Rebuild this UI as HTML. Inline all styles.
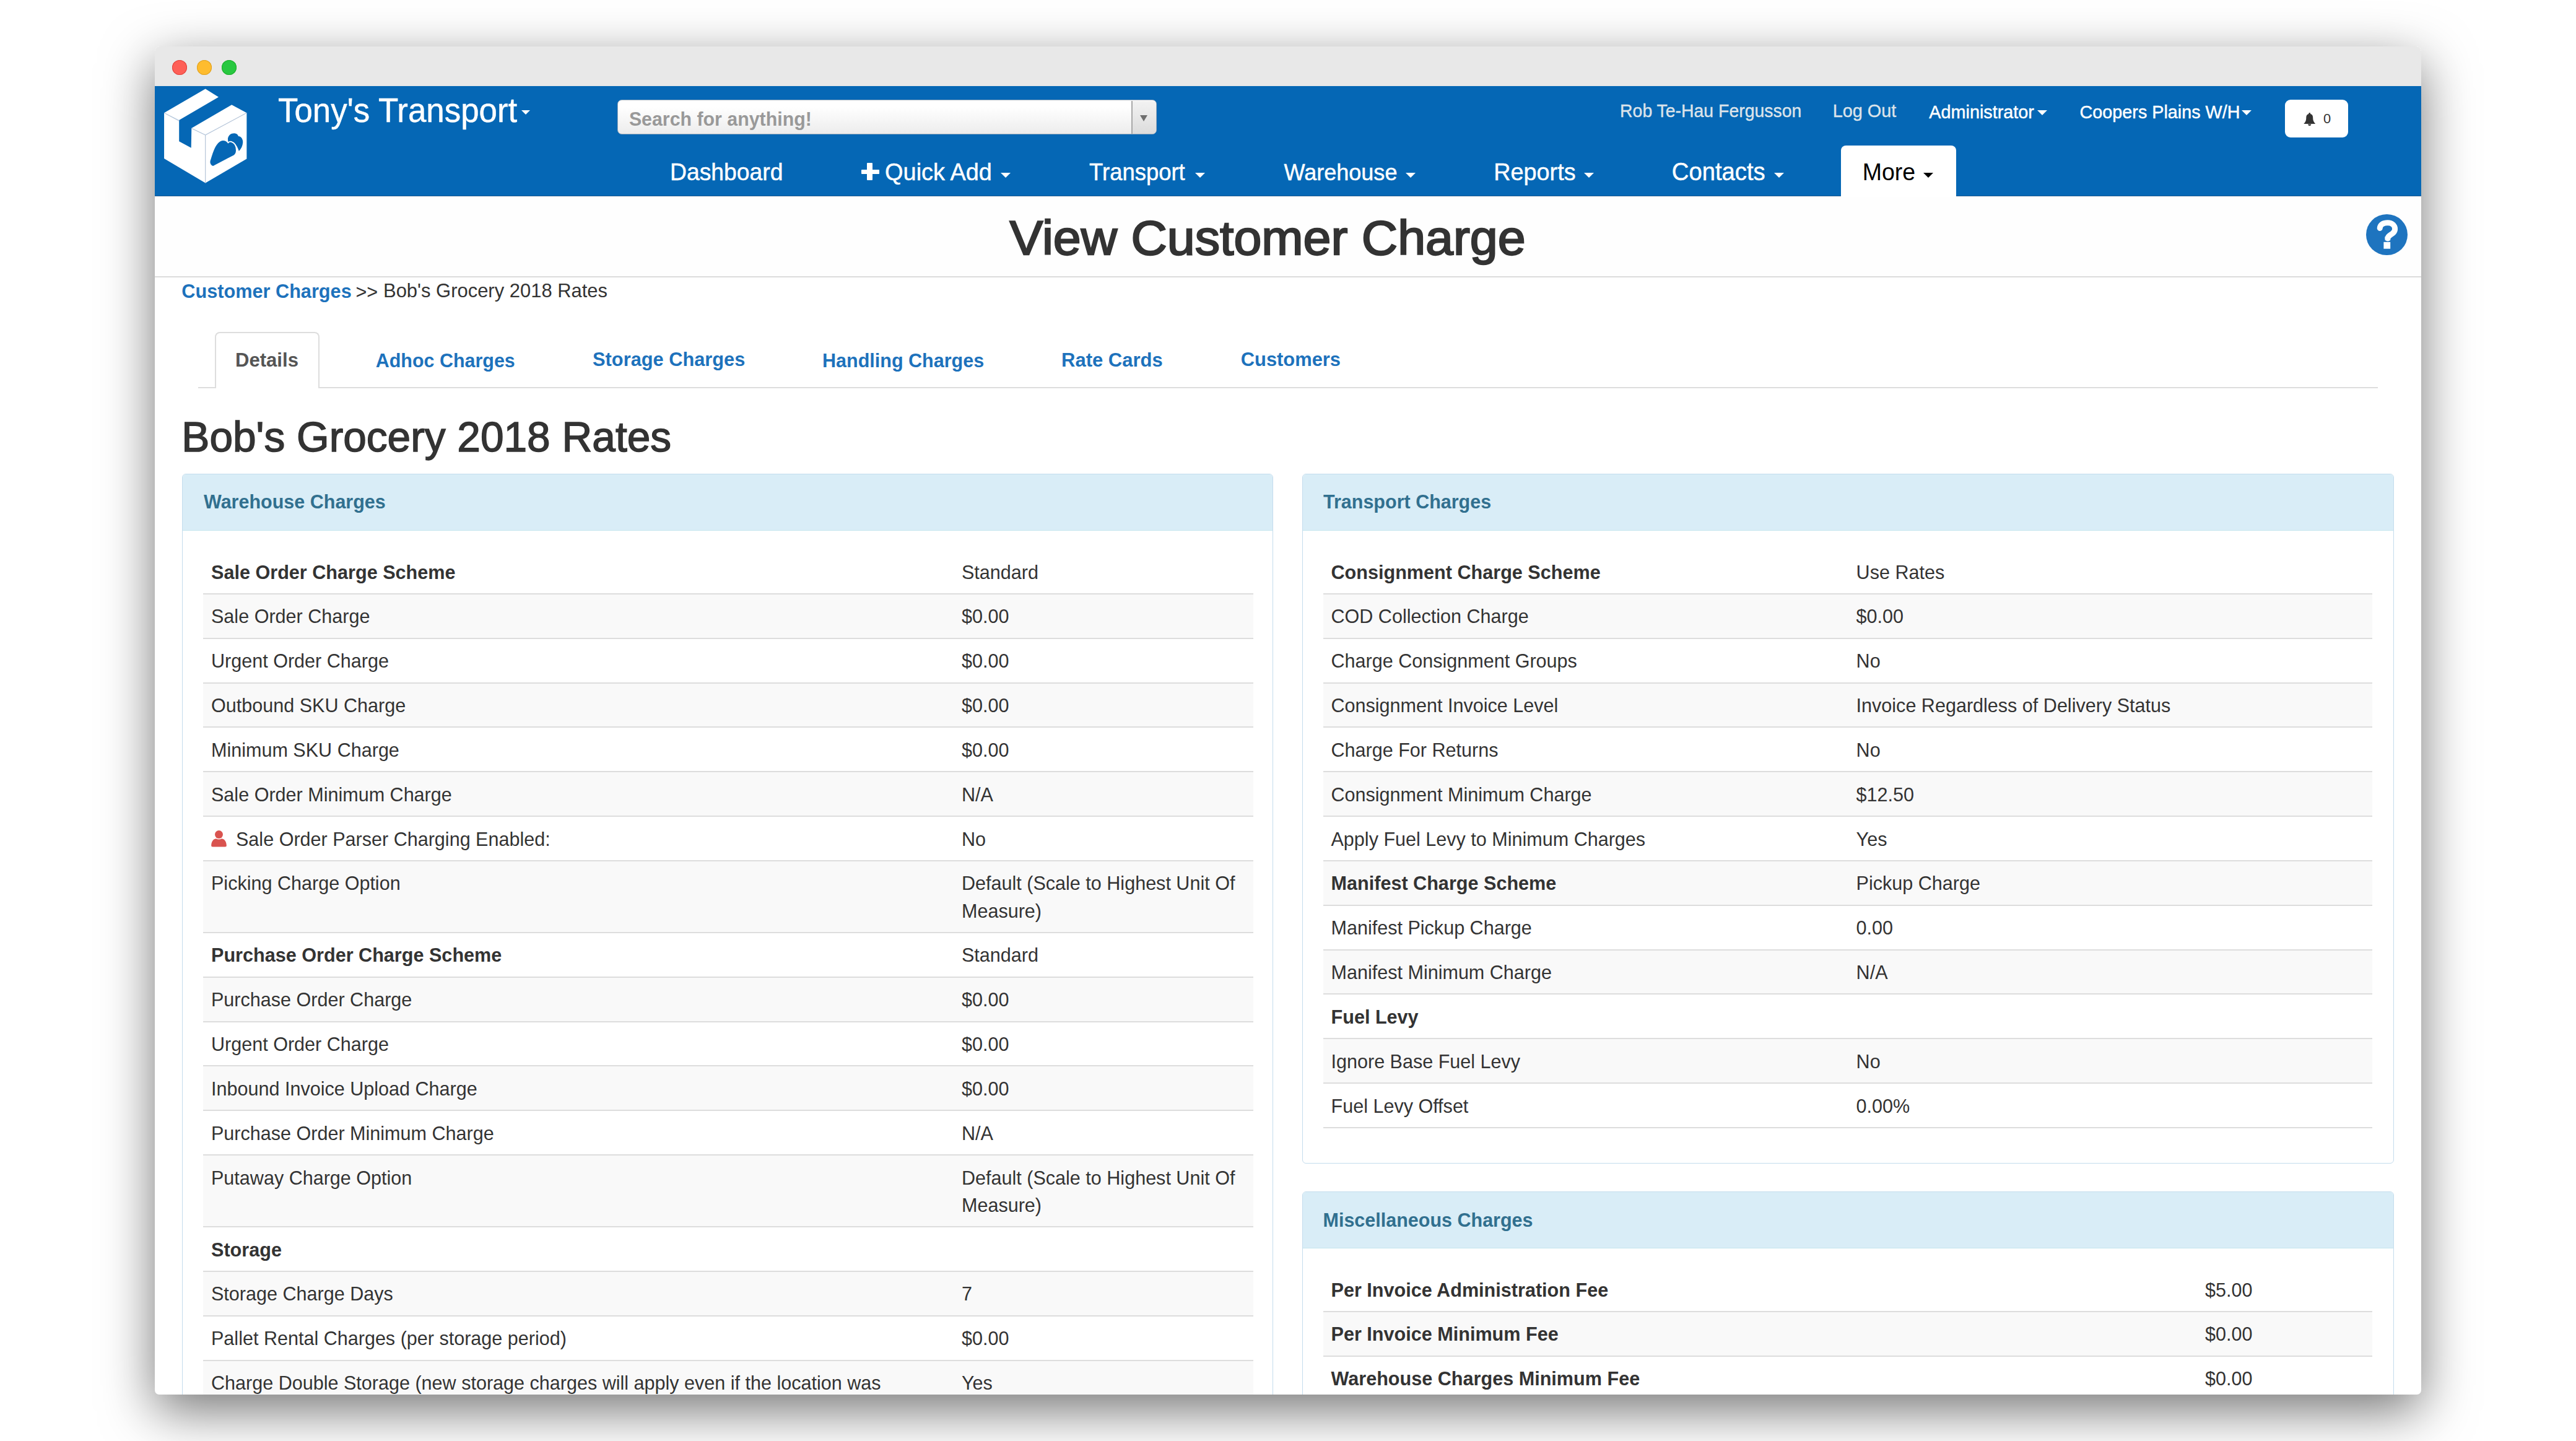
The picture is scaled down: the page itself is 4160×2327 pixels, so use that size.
<!DOCTYPE html>
<html><head><meta charset="utf-8"><title>View Customer Charge</title>
<style>
html,body{margin:0;padding:0;background:#fff;width:4160px;height:2327px;overflow:hidden}
body{font-family:"Liberation Sans",sans-serif;position:relative}
.r{position:absolute}
.t{position:absolute;line-height:1;white-space:nowrap;transform:scaleY(1.045)}
#win{position:absolute;left:250px;top:75px;width:3660px;height:2177px;border-radius:8px 8px 7px 7px;box-shadow:0 26px 84px rgba(0,0,0,.54);background:#fff}
#clip{position:absolute;left:0;top:0;width:4160px;height:2327px;clip-path:inset(75px 250px 75px 250px round 8px 8px 7px 7px)}
</style></head>
<body>
<div id="win"></div>
<div id="clip">
<div class="r" style="left:250.0px;top:75.0px;width:3660.0px;height:64.4px;background:#e8e8e8;border-radius:8px 8px 0 0"></div>
<div class="r" style="left:277.8px;top:96.6px;width:24.4px;height:24.4px;border-radius:50%;background:#fe5f57;box-shadow:inset 0 0 0 1px #e0443e"></div>
<div class="r" style="left:317.8px;top:96.6px;width:24.4px;height:24.4px;border-radius:50%;background:#febc2e;box-shadow:inset 0 0 0 1px #dea123"></div>
<div class="r" style="left:357.8px;top:96.6px;width:24.4px;height:24.4px;border-radius:50%;background:#28c840;box-shadow:inset 0 0 0 1px #1dad2b"></div>
<div class="r" style="left:250.0px;top:139.4px;width:3660.0px;height:178.1px;background:#0567b5;border-bottom:1.5px solid #1f5a8e;box-sizing:border-box"></div>
<svg class="r" style="left:255px;top:135px" width="160" height="170" viewBox="0 0 1356 1441">
<polygon points="85,400 650,72 830,185 290,500" fill="#fff"/>
<polygon points="460,610 1010,290 1215,400 650,700" fill="#fff"/>
<polygon points="85,400 290,500 290,790 455,880 460,610 650,700 650,1360 85,1025" fill="#fff"/>
<polygon points="650,700 1215,400 1215,1030 650,1360" fill="#fff"/>
<polyline points="85,400 290,510" stroke="#b9c6d8" stroke-width="9" fill="none"/>
<polyline points="460,612 650,705 1215,400" stroke="#b9c6d8" stroke-width="9" fill="none"/>
<line x1="650" y1="705" x2="650" y2="1360" stroke="#b9c6d8" stroke-width="10"/>
<path fill="#0567b5" d="M957,757 C962,708 1000,680 1047,681 C1078,682 1097,700 1101,720 C1135,718 1168,760 1163,808 C1160,850 1140,895 1109,924 C1095,880 1080,850 1060,830 C1030,800 990,790 961,808 Z"/>
<path fill="#0567b5" stroke="#fff" stroke-width="16" d="M755,1136 C705,1125 700,1070 716,1035 C738,965 758,885 800,832 C830,790 860,770 891,771 C930,772 950,790 961,808 C975,795 990,790 1006,796 C1050,810 1075,850 1076,915 C1076,960 1050,985 1026,994 L755,1136 Z"/>
</svg>
<div class="t" style="left:449.0px;top:152.9px;font-size:52.88px;font-weight:400;color:#fff;transform-origin:0 44.8px;-webkit-text-stroke:0.45px #fff">Tony's Transport</div>
<div class="r" style="left:842.0px;top:178.0px;width:0;height:0;border-left:7.5px solid transparent;border-right:7.5px solid transparent;border-top:7.0px solid #fff"></div>
<div class="r" style="left:997px;top:161.4px;width:871px;height:55.4px;box-sizing:border-box;border:1.5px solid #9eadbd;border-radius:7px;background:linear-gradient(#ffffff 20%,#ececec)"></div>
<div class="r" style="left:1826.8px;top:162.5px;width:2.2px;height:53.0px;background:#a8a8a8"></div>
<div class="r" style="left:1829.0px;top:162.5px;width:37.5px;height:53.0px;background:linear-gradient(#f2f2f2,#dcdcdc);border-radius:0 6px 6px 0"></div>
<div class="r" style="left:1841.0px;top:186.0px;width:0;height:0;border-left:6.7px solid transparent;border-right:6.7px solid transparent;border-top:10.0px solid #6e6e6e"></div>
<div class="t" style="left:1015.9px;top:177.9px;font-size:30.33px;font-weight:700;color:#999;transform-origin:0 25.7px;">Search for anything!</div>
<div class="t" style="left:2616.1px;top:165.1px;font-size:28.42px;font-weight:400;color:#dce3ea;transform-origin:0 24.1px;-webkit-text-stroke:0.4px #dce3ea">Rob Te-Hau Fergusson</div>
<div class="t" style="left:2959.7px;top:164.8px;font-size:28.82px;font-weight:400;color:#dce3ea;transform-origin:0 24.4px;-webkit-text-stroke:0.4px #dce3ea">Log Out</div>
<div class="t" style="left:3115.3px;top:167.0px;font-size:28.81px;font-weight:400;color:#fff;transform-origin:0 24.4px;-webkit-text-stroke:0.45px #fff">Administrator</div>
<div class="r" style="left:3290.0px;top:178.0px;width:0;height:0;border-left:8.2px solid transparent;border-right:8.2px solid transparent;border-top:8.0px solid #fff"></div>
<div class="t" style="left:3358.6px;top:167.1px;font-size:28.75px;font-weight:400;color:#fff;transform-origin:0 24.3px;-webkit-text-stroke:0.45px #fff">Coopers Plains W/H</div>
<div class="r" style="left:3619.5px;top:178.0px;width:0;height:0;border-left:8.5px solid transparent;border-right:8.5px solid transparent;border-top:8.0px solid #fff"></div>
<div class="r" style="left:3689.6px;top:160.6px;width:102.8px;height:61.4px;background:#fff;border-radius:9px"></div>
<svg class="r" style="left:3719.5px;top:181.5px" width="19.5" height="21.5" viewBox="0 0 19.5 21.5">
<circle cx="9.75" cy="1.4" r="1.4" fill="#333"/>
<path d="M9.75,1.9 C5.6,1.9 4.3,4.6 4.3,8.2 C4.3,12.2 3.4,14.6 0.3,18.1 L19.2,18.1 C16.1,14.6 15.2,12.2 15.2,8.2 C15.2,4.6 13.9,1.9 9.75,1.9 Z" fill="#333"/>
<path d="M7.1,18.4 C7.4,21.8 12.1,21.8 12.4,18.4 Z" fill="#333"/>
</svg>
<div class="t" style="left:3751.9px;top:181.2px;font-size:21.89px;font-weight:400;color:#333;transform-origin:0 18.5px;transform:none">0</div>
<div class="t" style="left:1082.0px;top:260.0px;font-size:37.3px;font-weight:400;color:#fff;transform-origin:0 31.6px;-webkit-text-stroke:0.45px #fff">Dashboard</div>
<div class="r" style="left:1390.5px;top:273.6px;width:29.1px;height:7.8px;background:#fff;border-radius:1px"></div>
<div class="r" style="left:1399.9px;top:263.1px;width:8.9px;height:28.3px;background:#fff;border-radius:1px"></div>
<div class="t" style="left:1429.1px;top:259.5px;font-size:37.93px;font-weight:400;color:#fff;transform-origin:0 32.1px;-webkit-text-stroke:0.45px #fff">Quick Add</div>
<div class="r" style="left:1616.0px;top:279.0px;width:0;height:0;border-left:8.5px solid transparent;border-right:8.5px solid transparent;border-top:8.0px solid #fff"></div>
<div class="t" style="left:1759.1px;top:260.7px;font-size:36.46px;font-weight:400;color:#fff;transform-origin:0 30.9px;-webkit-text-stroke:0.45px #fff">Transport</div>
<div class="r" style="left:1930.0px;top:279.0px;width:0;height:0;border-left:8.5px solid transparent;border-right:8.5px solid transparent;border-top:8.0px solid #fff"></div>
<div class="t" style="left:2073.5px;top:261.1px;font-size:36.04px;font-weight:400;color:#fff;transform-origin:0 30.5px;-webkit-text-stroke:0.45px #fff">Warehouse</div>
<div class="r" style="left:2270.0px;top:279.0px;width:0;height:0;border-left:8.5px solid transparent;border-right:8.5px solid transparent;border-top:8.0px solid #fff"></div>
<div class="t" style="left:2412.3px;top:259.6px;font-size:37.78px;font-weight:400;color:#fff;transform-origin:0 32.0px;-webkit-text-stroke:0.45px #fff">Reports</div>
<div class="r" style="left:2558.0px;top:279.0px;width:0;height:0;border-left:8.5px solid transparent;border-right:8.5px solid transparent;border-top:8.0px solid #fff"></div>
<div class="t" style="left:2699.8px;top:259.2px;font-size:38.24px;font-weight:400;color:#fff;transform-origin:0 32.4px;-webkit-text-stroke:0.45px #fff">Contacts</div>
<div class="r" style="left:2865.0px;top:279.0px;width:0;height:0;border-left:8.5px solid transparent;border-right:8.5px solid transparent;border-top:8.0px solid #fff"></div>
<div class="r" style="left:2973.0px;top:235.2px;width:185.5px;height:82.3px;background:#fff;border-radius:8px 8px 0 0"></div>
<div class="t" style="left:3007.7px;top:259.9px;font-size:37.49px;font-weight:400;color:#000;transform-origin:0 31.7px;">More</div>
<div class="r" style="left:3106.0px;top:278.5px;width:0;height:0;border-left:8.5px solid transparent;border-right:8.5px solid transparent;border-top:8.0px solid #000"></div>
<div class="r" style="left:250.0px;top:317.5px;width:3660.0px;height:130.7px;background:#fefefe;border-bottom:2px solid #dcdcdc;box-sizing:border-box"></div>
<div class="t" style="left:1630.5px;top:343.2px;font-size:80.74px;font-weight:400;color:#333;transform-origin:0 68.3px;-webkit-text-stroke:2.4px #333;transform:scaleY(0.96)">View Customer Charge</div>
<div class="r" style="left:3821px;top:345.5px;width:66.6px;height:66.6px;border-radius:50%;background:#1e74bf"></div>
<svg class="r" style="left:3836px;top:354px" width="40" height="50" viewBox="0 0 40 50">
<path d="M7.2,14.5 C7.8,8.5 13,5.8 19.8,5.8 C27,5.8 31.6,10 31.6,15.8 C31.6,21.5 27,23.5 23.5,26 C21.2,27.6 20,29 20,31" fill="none" stroke="#fff" stroke-width="9" stroke-linecap="round"/>
<rect x="15.6" y="28" width="8.6" height="6.2" fill="#fff"/>
<rect x="13.4" y="36.8" width="10.8" height="10.9" fill="#fff"/>
</svg>
<div class="t" style="left:293.3px;top:455.6px;font-size:30.68px;font-weight:700;color:#1d72bc;transform-origin:0 26.0px;transform:none">Customer Charges</div>
<div class="t" style="left:574.5px;top:455.7px;font-size:30.6px;font-weight:400;color:#333;transform-origin:0 25.9px;transform:none">&gt;&gt;</div>
<div class="t" style="left:619.0px;top:455.4px;font-size:30.96px;font-weight:400;color:#333;transform-origin:0 26.2px;transform:none">Bob's Grocery 2018 Rates</div>
<div class="r" style="left:320.0px;top:624.8px;width:3520.0px;height:2.0px;background:#dddddd"></div>
<div class="r" style="left:346.5px;top:536.4px;width:169px;height:90.4px;box-sizing:border-box;border:2px solid #dddddd;border-bottom:none;border-radius:8px 8px 0 0;background:#fff"></div>
<div class="t" style="left:380.0px;top:566.0px;font-size:31.09px;font-weight:700;color:#555;transform-origin:0 26.3px;transform:none">Details</div>
<div class="t" style="left:606.8px;top:566.5px;font-size:30.44px;font-weight:700;color:#1d72bc;transform-origin:0 25.8px;transform:none">Adhoc Charges</div>
<div class="t" style="left:957.1px;top:566.3px;font-size:30.77px;font-weight:700;color:#1d72bc;transform-origin:0 26.0px;transform:none">Storage Charges</div>
<div class="t" style="left:1328.0px;top:566.5px;font-size:30.53px;font-weight:700;color:#1d72bc;transform-origin:0 25.8px;transform:none">Handling Charges</div>
<div class="t" style="left:1714.0px;top:566.1px;font-size:31.01px;font-weight:700;color:#1d72bc;transform-origin:0 26.2px;transform:none">Rate Cards</div>
<div class="t" style="left:2003.8px;top:566.2px;font-size:30.86px;font-weight:700;color:#1d72bc;transform-origin:0 26.1px;transform:none">Customers</div>
<div class="t" style="left:293.3px;top:671.7px;font-size:67.63px;font-weight:400;color:#333;transform-origin:0 57.2px;-webkit-text-stroke:1.5px #333;transform:none">Bob's Grocery 2018 Rates</div>
<div class="r" style="left:294px;top:764.5px;width:1762.3000000000002px;height:1535.5px;box-sizing:border-box;border:1.8px solid #c4dced;border-radius:6px;background:#fff;overflow:hidden"><div style="position:absolute;left:0;top:0;right:0;height:91.0px;background:#d9edf7;border-bottom:1.8px solid #c4e5ee;box-sizing:border-box"></div></div>
<div class="t" style="left:329.0px;top:795.2px;font-size:30.5px;font-weight:700;color:#31708f;transform-origin:0 25.8px;transform:none">Warehouse Charges</div>
<div class="r" style="left:2103px;top:764.5px;width:1762.5px;height:1114.0px;box-sizing:border-box;border:1.8px solid #c4dced;border-radius:6px;background:#fff;overflow:hidden"><div style="position:absolute;left:0;top:0;right:0;height:91.0px;background:#d9edf7;border-bottom:1.8px solid #c4e5ee;box-sizing:border-box"></div></div>
<div class="t" style="left:2137.0px;top:795.2px;font-size:30.5px;font-weight:700;color:#31708f;transform-origin:0 25.8px;transform:none">Transport Charges</div>
<div class="r" style="left:2103px;top:1923.7px;width:1762.5px;height:376.29999999999995px;box-sizing:border-box;border:1.8px solid #c4dced;border-radius:6px;background:#fff;overflow:hidden"><div style="position:absolute;left:0;top:0;right:0;height:91.29999999999995px;background:#d9edf7;border-bottom:1.8px solid #c4e5ee;box-sizing:border-box"></div></div>
<div class="t" style="left:2136.5px;top:1954.5px;font-size:30.5px;font-weight:700;color:#31708f;transform-origin:0 25.8px;transform:none">Miscellaneous Charges</div>
<div class="t" style="left:341.0px;top:908.5px;font-size:30.6px;font-weight:700;color:#333;transform-origin:0 25.9px;">Sale Order Charge Scheme</div>
<div class="t" style="left:1553.0px;top:908.5px;font-size:30.55px;font-weight:400;color:#333;transform-origin:0 25.9px;">Standard</div>
<div class="r" style="left:328.0px;top:958.8px;width:1695.5px;height:71.8px;background:#f9f9f9"></div>
<div class="r" style="left:328.0px;top:957.8px;width:1695.5px;height:2.0px;background:#dddddd"></div>
<div class="t" style="left:341.0px;top:980.4px;font-size:30.55px;font-weight:400;color:#333;transform-origin:0 25.9px;">Sale Order Charge</div>
<div class="t" style="left:1553.0px;top:980.4px;font-size:30.55px;font-weight:400;color:#333;transform-origin:0 25.9px;">$0.00</div>
<div class="r" style="left:328.0px;top:1029.7px;width:1695.5px;height:2.0px;background:#dddddd"></div>
<div class="t" style="left:341.0px;top:1052.2px;font-size:30.55px;font-weight:400;color:#333;transform-origin:0 25.9px;">Urgent Order Charge</div>
<div class="t" style="left:1553.0px;top:1052.2px;font-size:30.55px;font-weight:400;color:#333;transform-origin:0 25.9px;">$0.00</div>
<div class="r" style="left:328.0px;top:1102.5px;width:1695.5px;height:71.8px;background:#f9f9f9"></div>
<div class="r" style="left:328.0px;top:1101.5px;width:1695.5px;height:2.0px;background:#dddddd"></div>
<div class="t" style="left:341.0px;top:1124.0px;font-size:30.55px;font-weight:400;color:#333;transform-origin:0 25.9px;">Outbound SKU Charge</div>
<div class="t" style="left:1553.0px;top:1124.0px;font-size:30.55px;font-weight:400;color:#333;transform-origin:0 25.9px;">$0.00</div>
<div class="r" style="left:328.0px;top:1173.3px;width:1695.5px;height:2.0px;background:#dddddd"></div>
<div class="t" style="left:341.0px;top:1195.9px;font-size:30.55px;font-weight:400;color:#333;transform-origin:0 25.9px;">Minimum SKU Charge</div>
<div class="t" style="left:1553.0px;top:1195.9px;font-size:30.55px;font-weight:400;color:#333;transform-origin:0 25.9px;">$0.00</div>
<div class="r" style="left:328.0px;top:1246.1px;width:1695.5px;height:71.8px;background:#f9f9f9"></div>
<div class="r" style="left:328.0px;top:1245.1px;width:1695.5px;height:2.0px;background:#dddddd"></div>
<div class="t" style="left:341.0px;top:1267.7px;font-size:30.55px;font-weight:400;color:#333;transform-origin:0 25.9px;">Sale Order Minimum Charge</div>
<div class="t" style="left:1553.0px;top:1267.7px;font-size:30.55px;font-weight:400;color:#333;transform-origin:0 25.9px;">N/A</div>
<div class="r" style="left:328.0px;top:1317.0px;width:1695.5px;height:2.0px;background:#dddddd"></div>
<svg class="r" style="left:340px;top:1340.9799999999998px" width="27" height="28" viewBox="0 0 27 28">
<circle cx="13.5" cy="6.6" r="6.5" fill="#d9534f"/>
<path d="M1.2,24.5 C1.2,18 4.5,13.8 9,13.2 C11,14.8 16,14.8 18,13.2 C22.5,13.8 25.8,18 25.8,24.5 C25.8,26 25,26.4 23.5,26.4 L3.5,26.4 C2,26.4 1.2,26 1.2,24.5 Z" fill="#d9534f"/>
</svg>
<div class="t" style="left:381.0px;top:1339.5px;font-size:30.55px;font-weight:400;color:#333;transform-origin:0 25.9px;">Sale Order Parser Charging Enabled:</div>
<div class="t" style="left:1553.0px;top:1339.5px;font-size:30.55px;font-weight:400;color:#333;transform-origin:0 25.9px;">No</div>
<div class="r" style="left:328.0px;top:1389.8px;width:1695.5px;height:116.0px;background:#f9f9f9"></div>
<div class="r" style="left:328.0px;top:1388.8px;width:1695.5px;height:2.0px;background:#dddddd"></div>
<div class="t" style="left:341.0px;top:1411.3px;font-size:30.55px;font-weight:400;color:#333;transform-origin:0 25.9px;">Picking Charge Option</div>
<div class="t" style="left:1553.0px;top:1411.3px;font-size:30.55px;font-weight:400;color:#333;transform-origin:0 25.9px;">Default (Scale to Highest Unit Of</div>
<div class="t" style="left:1553.0px;top:1455.5px;font-size:30.55px;font-weight:400;color:#333;transform-origin:0 25.9px;">Measure)</div>
<div class="r" style="left:328.0px;top:1504.8px;width:1695.5px;height:2.0px;background:#dddddd"></div>
<div class="t" style="left:341.0px;top:1527.3px;font-size:30.6px;font-weight:700;color:#333;transform-origin:0 25.9px;">Purchase Order Charge Scheme</div>
<div class="t" style="left:1553.0px;top:1527.4px;font-size:30.55px;font-weight:400;color:#333;transform-origin:0 25.9px;">Standard</div>
<div class="r" style="left:328.0px;top:1577.7px;width:1695.5px;height:71.8px;background:#f9f9f9"></div>
<div class="r" style="left:328.0px;top:1576.7px;width:1695.5px;height:2.0px;background:#dddddd"></div>
<div class="t" style="left:341.0px;top:1599.2px;font-size:30.55px;font-weight:400;color:#333;transform-origin:0 25.9px;">Purchase Order Charge</div>
<div class="t" style="left:1553.0px;top:1599.2px;font-size:30.55px;font-weight:400;color:#333;transform-origin:0 25.9px;">$0.00</div>
<div class="r" style="left:328.0px;top:1648.5px;width:1695.5px;height:2.0px;background:#dddddd"></div>
<div class="t" style="left:341.0px;top:1671.0px;font-size:30.55px;font-weight:400;color:#333;transform-origin:0 25.9px;">Urgent Order Charge</div>
<div class="t" style="left:1553.0px;top:1671.0px;font-size:30.55px;font-weight:400;color:#333;transform-origin:0 25.9px;">$0.00</div>
<div class="r" style="left:328.0px;top:1721.3px;width:1695.5px;height:71.8px;background:#f9f9f9"></div>
<div class="r" style="left:328.0px;top:1720.3px;width:1695.5px;height:2.0px;background:#dddddd"></div>
<div class="t" style="left:341.0px;top:1742.9px;font-size:30.55px;font-weight:400;color:#333;transform-origin:0 25.9px;">Inbound Invoice Upload Charge</div>
<div class="t" style="left:1553.0px;top:1742.9px;font-size:30.55px;font-weight:400;color:#333;transform-origin:0 25.9px;">$0.00</div>
<div class="r" style="left:328.0px;top:1792.2px;width:1695.5px;height:2.0px;background:#dddddd"></div>
<div class="t" style="left:341.0px;top:1814.7px;font-size:30.55px;font-weight:400;color:#333;transform-origin:0 25.9px;">Purchase Order Minimum Charge</div>
<div class="t" style="left:1553.0px;top:1814.7px;font-size:30.55px;font-weight:400;color:#333;transform-origin:0 25.9px;">N/A</div>
<div class="r" style="left:328.0px;top:1865.0px;width:1695.5px;height:116.0px;background:#f9f9f9"></div>
<div class="r" style="left:328.0px;top:1864.0px;width:1695.5px;height:2.0px;background:#dddddd"></div>
<div class="t" style="left:341.0px;top:1886.5px;font-size:30.55px;font-weight:400;color:#333;transform-origin:0 25.9px;">Putaway Charge Option</div>
<div class="t" style="left:1553.0px;top:1886.5px;font-size:30.55px;font-weight:400;color:#333;transform-origin:0 25.9px;">Default (Scale to Highest Unit Of</div>
<div class="t" style="left:1553.0px;top:1930.7px;font-size:30.55px;font-weight:400;color:#333;transform-origin:0 25.9px;">Measure)</div>
<div class="r" style="left:328.0px;top:1980.0px;width:1695.5px;height:2.0px;background:#dddddd"></div>
<div class="t" style="left:341.0px;top:2002.5px;font-size:30.6px;font-weight:700;color:#333;transform-origin:0 25.9px;">Storage</div>
<div class="r" style="left:328.0px;top:2052.8px;width:1695.5px;height:71.8px;background:#f9f9f9"></div>
<div class="r" style="left:328.0px;top:2051.8px;width:1695.5px;height:2.0px;background:#dddddd"></div>
<div class="t" style="left:341.0px;top:2074.4px;font-size:30.55px;font-weight:400;color:#333;transform-origin:0 25.9px;">Storage Charge Days</div>
<div class="t" style="left:1553.0px;top:2074.4px;font-size:30.55px;font-weight:400;color:#333;transform-origin:0 25.9px;">7</div>
<div class="r" style="left:328.0px;top:2123.7px;width:1695.5px;height:2.0px;background:#dddddd"></div>
<div class="t" style="left:341.0px;top:2146.2px;font-size:30.55px;font-weight:400;color:#333;transform-origin:0 25.9px;">Pallet Rental Charges (per storage period)</div>
<div class="t" style="left:1553.0px;top:2146.2px;font-size:30.55px;font-weight:400;color:#333;transform-origin:0 25.9px;">$0.00</div>
<div class="r" style="left:328.0px;top:2196.5px;width:1695.5px;height:71.8px;background:#f9f9f9"></div>
<div class="r" style="left:328.0px;top:2195.5px;width:1695.5px;height:2.0px;background:#dddddd"></div>
<div class="t" style="left:341.0px;top:2218.0px;font-size:30.55px;font-weight:400;color:#333;transform-origin:0 25.9px;">Charge Double Storage (new storage charges will apply even if the location was</div>
<div class="t" style="left:1553.0px;top:2218.0px;font-size:30.55px;font-weight:400;color:#333;transform-origin:0 25.9px;">Yes</div>
<div class="t" style="left:2149.5px;top:908.5px;font-size:30.6px;font-weight:700;color:#333;transform-origin:0 25.9px;">Consignment Charge Scheme</div>
<div class="t" style="left:2997.6px;top:908.5px;font-size:30.55px;font-weight:400;color:#333;transform-origin:0 25.9px;">Use Rates</div>
<div class="r" style="left:2136.5px;top:958.8px;width:1694.8px;height:71.8px;background:#f9f9f9"></div>
<div class="r" style="left:2136.5px;top:957.8px;width:1694.8px;height:2.0px;background:#dddddd"></div>
<div class="t" style="left:2149.5px;top:980.4px;font-size:30.55px;font-weight:400;color:#333;transform-origin:0 25.9px;">COD Collection Charge</div>
<div class="t" style="left:2997.6px;top:980.4px;font-size:30.55px;font-weight:400;color:#333;transform-origin:0 25.9px;">$0.00</div>
<div class="r" style="left:2136.5px;top:1029.7px;width:1694.8px;height:2.0px;background:#dddddd"></div>
<div class="t" style="left:2149.5px;top:1052.2px;font-size:30.55px;font-weight:400;color:#333;transform-origin:0 25.9px;">Charge Consignment Groups</div>
<div class="t" style="left:2997.6px;top:1052.2px;font-size:30.55px;font-weight:400;color:#333;transform-origin:0 25.9px;">No</div>
<div class="r" style="left:2136.5px;top:1102.5px;width:1694.8px;height:71.8px;background:#f9f9f9"></div>
<div class="r" style="left:2136.5px;top:1101.5px;width:1694.8px;height:2.0px;background:#dddddd"></div>
<div class="t" style="left:2149.5px;top:1124.0px;font-size:30.55px;font-weight:400;color:#333;transform-origin:0 25.9px;">Consignment Invoice Level</div>
<div class="t" style="left:2997.6px;top:1124.0px;font-size:30.55px;font-weight:400;color:#333;transform-origin:0 25.9px;">Invoice Regardless of Delivery Status</div>
<div class="r" style="left:2136.5px;top:1173.3px;width:1694.8px;height:2.0px;background:#dddddd"></div>
<div class="t" style="left:2149.5px;top:1195.9px;font-size:30.55px;font-weight:400;color:#333;transform-origin:0 25.9px;">Charge For Returns</div>
<div class="t" style="left:2997.6px;top:1195.9px;font-size:30.55px;font-weight:400;color:#333;transform-origin:0 25.9px;">No</div>
<div class="r" style="left:2136.5px;top:1246.1px;width:1694.8px;height:71.8px;background:#f9f9f9"></div>
<div class="r" style="left:2136.5px;top:1245.1px;width:1694.8px;height:2.0px;background:#dddddd"></div>
<div class="t" style="left:2149.5px;top:1267.7px;font-size:30.55px;font-weight:400;color:#333;transform-origin:0 25.9px;">Consignment Minimum Charge</div>
<div class="t" style="left:2997.6px;top:1267.7px;font-size:30.55px;font-weight:400;color:#333;transform-origin:0 25.9px;">$12.50</div>
<div class="r" style="left:2136.5px;top:1317.0px;width:1694.8px;height:2.0px;background:#dddddd"></div>
<div class="t" style="left:2149.5px;top:1339.5px;font-size:30.55px;font-weight:400;color:#333;transform-origin:0 25.9px;">Apply Fuel Levy to Minimum Charges</div>
<div class="t" style="left:2997.6px;top:1339.5px;font-size:30.55px;font-weight:400;color:#333;transform-origin:0 25.9px;">Yes</div>
<div class="r" style="left:2136.5px;top:1389.8px;width:1694.8px;height:71.8px;background:#f9f9f9"></div>
<div class="r" style="left:2136.5px;top:1388.8px;width:1694.8px;height:2.0px;background:#dddddd"></div>
<div class="t" style="left:2149.5px;top:1411.3px;font-size:30.6px;font-weight:700;color:#333;transform-origin:0 25.9px;">Manifest Charge Scheme</div>
<div class="t" style="left:2997.6px;top:1411.3px;font-size:30.55px;font-weight:400;color:#333;transform-origin:0 25.9px;">Pickup Charge</div>
<div class="r" style="left:2136.5px;top:1460.6px;width:1694.8px;height:2.0px;background:#dddddd"></div>
<div class="t" style="left:2149.5px;top:1483.2px;font-size:30.55px;font-weight:400;color:#333;transform-origin:0 25.9px;">Manifest Pickup Charge</div>
<div class="t" style="left:2997.6px;top:1483.2px;font-size:30.55px;font-weight:400;color:#333;transform-origin:0 25.9px;">0.00</div>
<div class="r" style="left:2136.5px;top:1533.5px;width:1694.8px;height:71.8px;background:#f9f9f9"></div>
<div class="r" style="left:2136.5px;top:1532.5px;width:1694.8px;height:2.0px;background:#dddddd"></div>
<div class="t" style="left:2149.5px;top:1555.0px;font-size:30.55px;font-weight:400;color:#333;transform-origin:0 25.9px;">Manifest Minimum Charge</div>
<div class="t" style="left:2997.6px;top:1555.0px;font-size:30.55px;font-weight:400;color:#333;transform-origin:0 25.9px;">N/A</div>
<div class="r" style="left:2136.5px;top:1604.3px;width:1694.8px;height:2.0px;background:#dddddd"></div>
<div class="t" style="left:2149.5px;top:1626.8px;font-size:30.6px;font-weight:700;color:#333;transform-origin:0 25.9px;">Fuel Levy</div>
<div class="r" style="left:2136.5px;top:1677.1px;width:1694.8px;height:71.8px;background:#f9f9f9"></div>
<div class="r" style="left:2136.5px;top:1676.1px;width:1694.8px;height:2.0px;background:#dddddd"></div>
<div class="t" style="left:2149.5px;top:1698.7px;font-size:30.55px;font-weight:400;color:#333;transform-origin:0 25.9px;">Ignore Base Fuel Levy</div>
<div class="t" style="left:2997.6px;top:1698.7px;font-size:30.55px;font-weight:400;color:#333;transform-origin:0 25.9px;">No</div>
<div class="r" style="left:2136.5px;top:1748.0px;width:1694.8px;height:2.0px;background:#dddddd"></div>
<div class="t" style="left:2149.5px;top:1770.5px;font-size:30.55px;font-weight:400;color:#333;transform-origin:0 25.9px;">Fuel Levy Offset</div>
<div class="t" style="left:2997.6px;top:1770.5px;font-size:30.55px;font-weight:400;color:#333;transform-origin:0 25.9px;">0.00%</div>
<div class="r" style="left:2136.5px;top:1819.8px;width:1694.8px;height:2.0px;background:#dddddd"></div>
<div class="t" style="left:2149.5px;top:2067.5px;font-size:30.6px;font-weight:700;color:#333;transform-origin:0 25.9px;">Per Invoice Administration Fee</div>
<div class="t" style="left:3561.0px;top:2067.5px;font-size:30.55px;font-weight:400;color:#333;transform-origin:0 25.9px;">$5.00</div>
<div class="r" style="left:2136.5px;top:2117.8px;width:1694.8px;height:71.8px;background:#f9f9f9"></div>
<div class="r" style="left:2136.5px;top:2116.8px;width:1694.8px;height:2.0px;background:#dddddd"></div>
<div class="t" style="left:2149.5px;top:2139.3px;font-size:30.6px;font-weight:700;color:#333;transform-origin:0 25.9px;">Per Invoice Minimum Fee</div>
<div class="t" style="left:3561.0px;top:2139.4px;font-size:30.55px;font-weight:400;color:#333;transform-origin:0 25.9px;">$0.00</div>
<div class="r" style="left:2136.5px;top:2188.7px;width:1694.8px;height:2.0px;background:#dddddd"></div>
<div class="t" style="left:2149.5px;top:2211.2px;font-size:30.6px;font-weight:700;color:#333;transform-origin:0 25.9px;">Warehouse Charges Minimum Fee</div>
<div class="t" style="left:3561.0px;top:2211.2px;font-size:30.55px;font-weight:400;color:#333;transform-origin:0 25.9px;">$0.00</div>
</div>
</body></html>
